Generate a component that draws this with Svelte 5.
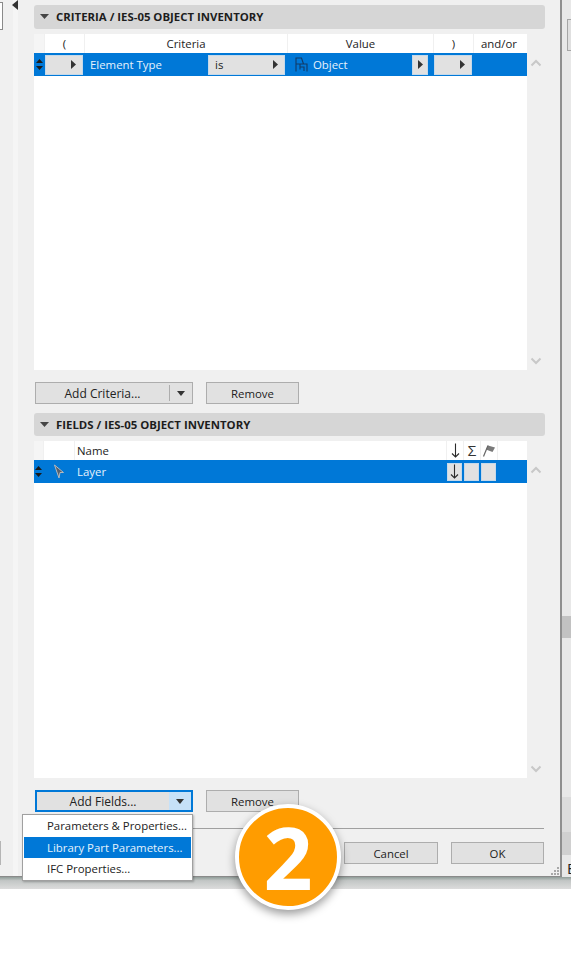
<script>
  const menuItems = [
    { label: 'Parameters & Properties...', active: false },
    { label: 'Library Part Parameters...', active: true },
    { label: 'IFC Properties...', active: false }
  ];
</script>

{#snippet chevron(up)}
  <svg class="chevron" width="12" height="8" viewBox="0 0 12 8" fill="none">
    <path d={up ? 'M1.5 6.5 L6 2 L10.5 6.5' : 'M1.5 1.5 L6 6 L10.5 1.5'} stroke="#c8c8c8" stroke-width="2" />
  </svg>
{/snippet}

{#snippet handle()}
  <svg width="9" height="13" viewBox="0 0 9 13" fill="#1a1a1a">
    <path d="M4.5 1 L8 5 H1 Z M4.5 12 L8 8 H1 Z" />
  </svg>
{/snippet}

{#snippet caret()}
  <svg width="8" height="5" viewBox="0 0 8 5" fill="#333"><path d="M0 0 H8 L4 5 Z" /></svg>
{/snippet}

{#snippet downArrow()}
  <svg width="9" height="15" viewBox="0 0 9 15" fill="none" stroke="#2a2a2a" stroke-width="1.1">
    <path d="M4.5 0.5 V14 M1 10.5 L4.5 14 L8 10.5" />
  </svg>
{/snippet}

{#snippet popup(label, extraClass = '')}
  <span class="popup {extraClass}">
    <span class="popup-label">{label}</span>
    <svg width="5" height="9" viewBox="0 0 5 9" fill="#333"><path d="M0 0 L5 4.5 L0 9 Z" /></svg>
  </span>
{/snippet}

<div class="page">
  <div class="screen">
    <div class="dialog">
      <div class="left-stripe"></div>
      <svg class="corner-arrow" width="6" height="10" viewBox="0 0 6 10" fill="#333"><path d="M6 0 V10 L0 5 Z" /></svg>
      <div class="corner-box"></div>
      <div class="left-box"></div>

      <section class="group">
        <div class="group-head">
          <svg width="9" height="5" viewBox="0 0 9 5" fill="#444"><path d="M0 0 H9 L4.5 5 Z" /></svg>
          <span>CRITERIA / IES-05 OBJECT INVENTORY</span>
        </div>
        <div class="list-wrap criteria-wrap">
          <div class="list">
            <div class="row-head crit-cols">
              <span class="head-blank"></span>
              <span>(</span>
              <span>Criteria</span>
              <span>Value</span>
              <span>)</span>
              <span>and/or</span>
            </div>
            <div class="row-sel crit-cols">
              <span class="handle">{@render handle()}</span>
              <span class="cell">{@render popup('', 'paren')}</span>
              <span class="cell crit-cell">
                <span class="sel-text">Element Type</span>
                {@render popup('is', 'is-popup')}
              </span>
              <span class="cell value-cell">
                <svg width="14" height="15" viewBox="0 0 14 15" fill="none" stroke="#123a66" stroke-width="1.1">
                  <path d="M2 14.5 V1 H7.5 L9.5 7 M2 7 H13 V14.5 M6 7 V12.5 M6 10 H10 V14" />
                </svg>
                <span class="sel-text">Object</span>
                <span class="mini-btn">
                  <svg width="5" height="9" viewBox="0 0 5 9" fill="#333"><path d="M0 0 L5 4.5 L0 9 Z" /></svg>
                </span>
              </span>
              <span class="cell">{@render popup('', 'paren')}</span>
              <span></span>
            </div>
          </div>
          <div class="gutter">
            {@render chevron(true)}
            {@render chevron(false)}
          </div>
        </div>
        <div class="btn-row">
          <div class="btn split">
            <span class="split-main">Add Criteria...</span>
            <span class="split-arrow">{@render caret()}</span>
          </div>
          <div class="btn remove">Remove</div>
        </div>
      </section>

      <section class="group fields">
        <div class="group-head fields-head">
          <svg width="9" height="5" viewBox="0 0 9 5" fill="#444"><path d="M0 0 H9 L4.5 5 Z" /></svg>
          <span>FIELDS / IES-05 OBJECT INVENTORY</span>
        </div>
        <div class="list-wrap fields-wrap">
          <div class="list">
            <div class="row-head field-cols">
              <span class="head-blank"></span>
              <span></span>
              <span class="name-head">Name</span>
              <span class="glyph">{@render downArrow()}</span>
              <span class="glyph">Σ</span>
              <span class="glyph">
                <svg width="14" height="14" viewBox="0 0 14 14" fill="none">
                  <path d="M6 1.5 L13 3.5 L10.5 8 L4 5.5 Z" fill="#7a7a7a" />
                  <path d="M6 1.5 L1.5 12.5" stroke="#666" stroke-width="1.2" />
                </svg>
              </span>
              <span></span>
            </div>
            <div class="row-sel field-cols">
              <span class="handle">{@render handle()}</span>
              <span class="cell pointer-cell">
                <svg width="12" height="15" viewBox="0 0 12 15" fill="#56616d" stroke="#b4b9bf" stroke-width="1">
                  <path d="M1.5 1 L10.5 8.5 H7 L6 14 L1.5 1 Z" />
                </svg>
              </span>
              <span class="cell sel-text layer-text">Layer</span>
              <span class="check">{@render downArrow()}</span>
              <span class="check"></span>
              <span class="check"></span>
              <span></span>
            </div>
          </div>
          <div class="gutter">
            {@render chevron(true)}
            {@render chevron(false)}
          </div>
        </div>
        <div class="btn-row fields-btns">
          <div class="btn split focused">
            <span class="split-main focused-main">Add Fields...</span>
            <span class="split-arrow focused-arrow">{@render caret()}</span>
          </div>
          <div class="btn remove">Remove</div>
        </div>
      </section>

      <div class="divider"></div>
      <div class="footer">
        <div class="btn cancel">Cancel</div>
        <div class="btn ok">OK</div>
      </div>
      <svg class="grip" width="9" height="9" viewBox="0 0 9 9" fill="#a8a8a8">
        <rect x="7" y="1" width="2" height="2" />
        <rect x="4" y="4" width="2" height="2" />
        <rect x="7" y="4" width="2" height="2" />
        <rect x="1" y="7" width="2" height="2" />
        <rect x="4" y="7" width="2" height="2" />
        <rect x="7" y="7" width="2" height="2" />
      </svg>

      <ul class="menu">
        {#each menuItems as item}
          <li class:active={item.active}>{item.label}</li>
        {/each}
      </ul>
    </div>

    <aside class="side">
      <div class="side-box"></div>
      <div class="side-thumb"></div>
      <div class="side-block"></div>
      <div class="side-e">E</div>
    </aside>
    <div class="under"></div>
  </div>

  <div class="badge"><span>2</span></div>
</div>

<style>
  :global(body) {
    margin: 0;
    background: #fff;
  }

  .page {
    position: relative;
    width: 571px;
    height: 979px;
    overflow: hidden;
    background: #fff;
    font-family: 'Open Sans', 'Noto Sans', sans-serif;
    font-size: 11.4px;
    color: #222;
  }

  .screen {
    display: grid;
    grid-template-columns: 562px 9px;
    grid-template-rows: 877px 12px;
    background: #e8e8e8;
  }

  .dialog {
    position: relative;
    box-sizing: border-box;
    padding: 5px 16px 0 34px;
    background: #f0f0f0;
    border-right: 2px solid #8f8f8f;
    border-bottom: 1px solid #8a8a8a;
  }

  .corner-arrow {
    position: absolute;
    left: 12px;
    top: 0;
  }

  .corner-box {
    position: absolute;
    left: -1px;
    top: 2px;
    width: 2px;
    height: 26px;
    border: 1px solid #8a8a8a;
    background: #fff;
  }

  .left-stripe {
    position: absolute;
    left: 13px;
    top: 0;
    bottom: 0;
    width: 5px;
    background: #f5f5f5;
  }

  .left-box {
    position: absolute;
    left: 0;
    top: 841px;
    width: 1px;
    height: 24px;
    background: #b5b5b5;
  }

  .group-head {
    position: relative;
    display: flex;
    align-items: center;
    gap: 7px;
    height: 24px;
    box-sizing: border-box;
    padding: 0 0 2px 6px;
    width: 511px;
    background: #d6d6d6;
    border-radius: 3px;
    font-weight: 700;
    font-size: 11.4px;
    color: #1d1d1d;
  }

  .fields-head {
    height: 23px;
    padding-bottom: 0;
  }

  .list-wrap {
    position: relative;
    display: flex;
    margin-top: 5px;
  }

  .criteria-wrap {
    height: 336px;
  }

  .fields-wrap {
    height: 337px;
  }

  .list {
    width: 494px;
    background: #fff;
  }

  .gutter {
    width: 17px;
    box-sizing: border-box;
    padding: 25px 0 5px;
    display: flex;
    flex-direction: column;
    justify-content: space-between;
    align-items: center;
  }

  .chevron {
    display: block;
  }

  .row-head,
  .row-sel {
    display: grid;
    align-items: center;
    text-align: center;
  }

  .crit-cols {
    grid-template-columns: 10px 40px 203px 146px 40px 51px;
    width: 493px;
  }

  .field-cols {
    grid-template-columns: 9px 31px 372px 17px 17px 17px 1fr;
    width: 493px;
  }

  .row-head {
    height: 19px;
  }

  .row-head > span {
    height: 100%;
    line-height: 19px;
    border-left: 1px solid #f0f0f0;
    box-sizing: border-box;
  }

  .row-head > .head-blank {
    background: #f5f5f5;
    border-left: 0;
  }

  .row-head > .name-head {
    text-align: left;
    padding-left: 2px;
  }

  .glyph {
    font-size: 15px;
    color: #333;
    display: flex;
    align-items: center;
    justify-content: center;
  }

  .row-sel {
    height: 23px;
    background: #0078d7;
    text-align: left;
  }

  .handle {
    display: flex;
    justify-content: center;
    align-items: center;
    height: 100%;
  }

  .cell {
    display: flex;
    align-items: center;
    height: 100%;
  }

  .sel-text {
    color: #e6f2fc;
  }

  .popup {
    display: flex;
    align-items: center;
    justify-content: space-between;
    box-sizing: border-box;
    height: 20px;
    padding: 0 6px;
    background: #e1e1e1;
    border: 1px solid #c5d9ea;
    color: #222;
  }

  .paren {
    width: 38px;
    margin-left: 1px;
  }

  .crit-cell {
    padding-left: 6px;
    justify-content: space-between;
  }

  .is-popup {
    width: 77px;
    margin-right: 2px;
  }

  .value-cell {
    padding-left: 7px;
    gap: 5px;
  }

  .mini-btn {
    display: flex;
    align-items: center;
    justify-content: center;
    width: 16px;
    height: 20px;
    margin-left: auto;
    margin-right: 5px;
    background: #e1e1e1;
    border: 1px solid #c5d9ea;
    box-sizing: border-box;
  }

  .pointer-cell {
    padding-left: 10px;
  }

  .layer-text {
    padding-left: 3px;
  }

  .check {
    display: flex;
    align-items: center;
    justify-content: center;
    box-sizing: border-box;
    width: 15px;
    height: 18px;
    margin-left: 1px;
    background: #e1e1e1;
    border: 1px solid #c5d9ea;
  }

  .btn {
    display: flex;
    align-items: center;
    justify-content: center;
    box-sizing: border-box;
    height: 22px;
    background: #e1e1e1;
    border: 1px solid #adadad;
    color: #222;
  }

  .btn-row {
    display: flex;
    gap: 13px;
    margin-top: 12px;
    margin-left: 1px;
  }

  .split {
    width: 158px;
    align-items: stretch;
  }

  .split-main {
    flex: 1;
    display: flex;
    align-items: center;
    justify-content: center;
    font-size: 12px;
    border-right: 1px solid #adadad;
    margin: 2px 0;
  }

  .split-arrow {
    flex: none;
    width: 22px;
    display: flex;
    align-items: center;
    justify-content: center;
  }

  .remove {
    width: 93px;
  }

  .group.fields {
    margin-top: 9px;
  }

  .focused {
    border: 2px solid #0078d7;
  }

  .focused-main {
    border-right: 0;
    margin: 0;
  }

  .focused-arrow {
    background: #c6e1f8;
  }

  .divider {
    height: 1px;
    margin-top: 16px;
    width: 510px;
    background: #a0a0a0;
  }

  .footer {
    display: flex;
    justify-content: flex-end;
    gap: 13px;
    margin-top: 13px;
    width: 510px;
  }

  .cancel {
    width: 94px;
  }

  .ok {
    width: 93px;
  }

  .grip {
    position: absolute;
    right: 1px;
    bottom: 1px;
  }

  .menu {
    position: absolute;
    left: 22px;
    top: 814px;
    width: 171px;
    height: 67px;
    box-sizing: border-box;
    margin: 0;
    padding: 0 1px;
    list-style: none;
    background: #fff;
    border: 1px solid #a0a0a0;
    box-shadow: 1px 1px 2px rgba(0, 0, 0, 0.25);
    z-index: 2;
  }

  .menu li {
    height: 21.5px;
    line-height: 21px;
    padding-left: 23px;
    color: #222;
  }

  .menu li.active {
    background: #0078d7;
    color: #e6f2fc;
  }

  .side {
    position: relative;
    overflow: hidden;
    background: #e8e8e8;
  }

  .side-box {
    position: absolute;
    left: 5px;
    top: 19px;
    width: 12px;
    height: 30px;
    border: 1px solid #a5a5a5;
    background: #e0e0e0;
  }

  .side-thumb {
    position: absolute;
    left: 0;
    top: 616px;
    width: 9px;
    height: 22px;
    background: #c2c2c2;
  }

  .side-block {
    position: absolute;
    left: 0;
    top: 797px;
    width: 9px;
    height: 58px;
    background: linear-gradient(#dcdcdc 60%, #d0d0d0 60%);
  }

  .side-e {
    position: absolute;
    left: 5px;
    top: 859px;
    font-size: 15px;
    line-height: 18px;
    color: #222;
  }

  .under {
    grid-column: 1 / -1;
    background: linear-gradient(#8f9c98, #c2c6c5 30%, #dcdcdc);
  }

  .badge {
    position: absolute;
    left: 235px;
    top: 804px;
    width: 106px;
    height: 106px;
    box-sizing: border-box;
    display: flex;
    align-items: center;
    justify-content: center;
    border-radius: 50%;
    background: #ff9c00;
    border: 4px solid #fff;
    box-shadow: 0 4px 10px rgba(0, 0, 0, 0.4);
    color: #fff;
    font-family: 'Open Sans', sans-serif;
    font-weight: 700;
    font-size: 86px;
    line-height: 1;
    z-index: 3;
  }
</style>
